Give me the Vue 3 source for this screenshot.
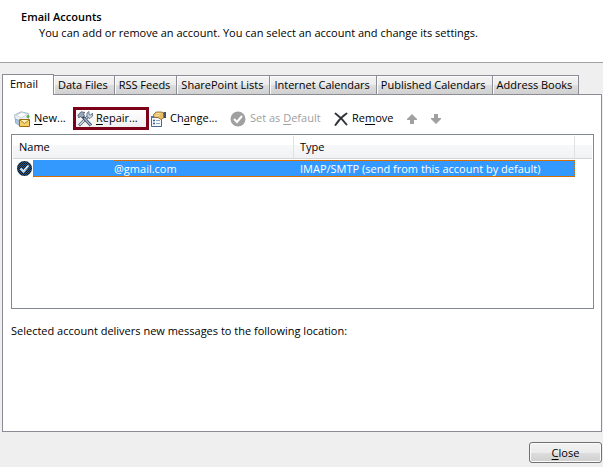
<template>
  <div class="dialog">
    <header class="dialog-header">
      <h1>Email Accounts</h1>
      <p>You can add or remove an account. You can select an account and change its settings.</p>
    </header>

    <main class="dialog-body">
      <div class="tabs" role="tablist">
        <button
          v-for="tab in tabs"
          :key="tab"
          type="button"
          role="tab"
          :aria-selected="tab === activeTab"
          :class="['tab', { active: tab === activeTab }]"
          @click="activeTab = tab"
        >{{ tab }}</button>
      </div>

      <section class="panel" role="tabpanel">
        <div class="toolbar">
          <button type="button" class="tool new">
            <svg width="16" height="16" viewBox="0 0 16 16">
              <path d="M.5 4L7 .8l7.500 1.700V8l-6 4.500-7-3z" fill="#eaf1f6" stroke="#a9bac8" />
              <path d="M2 4L8 1.500l5.500 1.500-6 4z" fill="#fff" stroke="#b4c6d6" stroke-width=".7" />
              <path d="M1.500 8l4 1.500v5L1.500 12z" fill="#a9c6de" stroke="#8aa5be" stroke-width=".8" />
              <circle cx="14" cy="5.500" r="1.500" fill="#55b73c" />
              <path d="M5.500 8.500h10v7h-10z" fill="#f7cf67" stroke="#9b6c14" />
              <path d="M6 9l4.500 3.500L15 9" fill="#fff0b8" stroke="#a8761a" stroke-width=".9" />
            </svg>
            <span><u>N</u>ew...</span>
          </button>
          <button type="button" class="tool repair">
            <svg width="16" height="16" viewBox="0 0 16 16">
              <path d="M2 14.500L11 5.500" stroke="#4a586c" stroke-width="2.600" />
              <path d="M2.500 14L11 5.500" stroke="#dbe4ee" stroke-width="1.200" />
              <path d="M10 6V2l2-1.500v3l2 .5 1.500-2v3l-2.500 2.500z" fill="#c9d6e4" stroke="#56667d" stroke-width=".8" />
              <path d="M5.500 5.500L14 14.500" stroke="#34445c" stroke-width="3" />
              <path d="M7 7L14 14.500" stroke="#9fb6d2" stroke-width="1.400" />
              <path d="M.8 4L4 .8l4 .7-1.500 1.200.8 1.800-2.300 2.300-1.800-1.300L1.800 7z" fill="#98a8ba" stroke="#4c5a6d" stroke-width=".8" />
            </svg>
            <span><u>R</u>epair...</span>
          </button>
          <button type="button" class="tool change">
            <svg width="16" height="16" viewBox="0 0 16 16">
              <path d="M1.500 5.500h10v10h-10z" fill="#f5f9fd" stroke="#49688f" />
              <path d="M1 5h11v2H1z" fill="#4d78ad" />
              <path d="M3 9.500h2M3 12.500h2" stroke="#3a5e91" stroke-width="1.500" />
              <path d="M6 9.500h4M6 12.500h4" stroke="#8ba3bf" />
              <path d="M3 4l3-3h6l2 1.500v4L11 8.500 8 6.500H4.500z" fill="#e9bd63" stroke="#93682a" stroke-width=".8" />
              <path d="M5.500 4.500h4M6.500 2.500h4" stroke="#fae3a8" />
              <path d="M13.500 1H16v6h-2.500z" fill="#42516b" />
            </svg>
            <span>Ch<u>a</u>nge...</span>
          </button>
          <button type="button" class="tool default" disabled>
            <svg width="16" height="16" viewBox="0 0 16 16">
              <circle cx="8" cy="8" r="7.500" fill="#a0a0a0" />
              <path d="M4 8l3 3 5-6" fill="none" stroke="#fff" stroke-width="2" />
            </svg>
            <span>Set as <u>D</u>efault</span>
          </button>
          <button type="button" class="tool remove">
            <svg width="14" height="14" viewBox="0 0 14 14">
              <path d="M1.500 1.500C5 4 9 8 12.500 12.500M12.500 1.500C8 4.500 4 9 1.500 13" fill="none" stroke="#30343a" stroke-width="1.900" stroke-linecap="round" />
            </svg>
            <span>Re<u>m</u>ove</span>
          </button>
          <button type="button" class="tool move" disabled aria-label="Move up">
            <svg width="10" height="10" viewBox="0 0 10 10"><path d="M5 0l5 5v1H7v4H3V6H0V5z" fill="#a0a0a0" /></svg>
          </button>
          <button type="button" class="tool move" disabled aria-label="Move down">
            <svg width="10" height="10" viewBox="0 0 10 10"><path d="M5 10l5-5V4H7V0H3v4H0v1z" fill="#a0a0a0" /></svg>
          </button>
        </div>

        <div class="account-list">
          <table>
            <colgroup>
              <col class="col-icon" />
              <col class="col-name" />
              <col />
              <col class="col-end" />
            </colgroup>
            <thead>
              <tr>
                <th colspan="2">Name</th>
                <th>Type</th>
                <th></th>
              </tr>
            </thead>
            <tbody>
              <tr v-for="account in accounts" :key="account.name">
                <td class="status">
                  <svg width="15" height="15" viewBox="0 0 15 15">
                    <defs>
                      <pattern id="dither" width="2" height="2" patternUnits="userSpaceOnUse">
                        <path d="M0 0h1v1H0zM1 1h1v1H1z" fill="#3399ff" fill-opacity=".5" />
                      </pattern>
                    </defs>
                    <circle cx="7.500" cy="7.500" r="7.500" fill="#17191d" />
                    <path d="M3.500 7.500l3 3 5-6" fill="none" stroke="#fff" stroke-width="2" />
                    <circle cx="7.500" cy="7.500" r="7.500" fill="url(#dither)" />
                  </svg>
                </td>
                <td class="selected name"><span class="mask"></span>{{ account.name }}</td>
                <td class="selected type">{{ account.type }}</td>
                <td></td>
              </tr>
            </tbody>
          </table>
        </div>

        <p class="location">Selected account delivers new messages to the following location:</p>
      </section>
    </main>

    <footer class="dialog-footer">
      <button type="button" class="close"><u>C</u>lose</button>
    </footer>
  </div>
</template>

<script setup>
import { ref } from 'vue'

const tabs = [
  'Email',
  'Data Files',
  'RSS Feeds',
  'SharePoint Lists',
  'Internet Calendars',
  'Published Calendars',
  'Address Books',
]
const activeTab = ref('Email')

const accounts = [
  { name: '@gmail.com', type: 'IMAP/SMTP (send from this account by default)' },
]
</script>

<style>
body {
  margin: 0;
  background: #efefef;
}
</style>

<style scoped>
.dialog {
  display: flex;
  flex-direction: column;
  min-height: 100vh;
  box-sizing: border-box;
  background: #efefef;
  color: #000;
  font: 11px/16px "Open Sans", "Noto Sans", sans-serif;
}

h1,
p {
  margin: 0;
  font-size: 11px;
}

h1 {
  font-weight: 600;
}

button {
  font: inherit;
  color: inherit;
}

u {
  text-underline-offset: 2px;
}

.dialog-header {
  height: 53px;
  padding: 9px 21px 0;
  background: #fff;
  border-bottom: 1px solid #a0a0a0;
}

.dialog-header p {
  padding-left: 18px;
}

.dialog-body {
  flex: 1;
  display: flex;
  flex-direction: column;
  padding: 11px 1px 0 2px;
}

.tabs {
  display: flex;
  align-items: flex-end;
}

.tab {
  height: 19px;
  margin: 0;
  padding: 0 6px 0 4px;
  border: 1px solid #8b8c96;
  border-left-width: 0;
  border-bottom: 0;
  background: linear-gradient(#f3f3f3, #ececec 50%, #dedede 50%, #d0d0d0);
  box-shadow: inset 1px 1px #fcfcfc;
  line-height: 18px;
  white-space: nowrap;
}

.tab.active {
  position: relative;
  height: 21px;
  width: 52px;
  margin-bottom: -1px;
  padding: 0 7px 2px;
  border-left-width: 1px;
  background: #fff;
  text-align: left;
}

.panel {
  flex: 1;
  padding: 12px 7px 0 8px;
  background: #fff;
  border: 1px solid #8b8c96;
}

.toolbar {
  display: flex;
  align-items: center;
  height: 23px;
  margin-bottom: 4px;
}

.tool {
  display: flex;
  align-items: center;
  gap: 4px;
  height: 23px;
  padding: 0 3px;
  border: 0;
  background: none;
  white-space: nowrap;
}

.tool span {
  padding-bottom: 2px;
}

.tool:disabled {
  color: #a0a0a0;
}

.new {
  width: 62px;
}

.repair {
  width: 76px;
  gap: 3px;
  border: 3px solid #7d0019;
  padding: 0 1px;
  background: linear-gradient(#fff, #f0f0f0);
}

.change {
  width: 78px;
  padding: 0 1px;
}

.default {
  width: 105px;
}

.remove {
  width: 68px;
  padding: 0 2px;
}

.move {
  width: 24px;
  padding: 0 7px;
}

.account-list {
  height: 175px;
  padding: 1px;
  box-sizing: border-box;
  border: 1px solid #828790;
}

table {
  width: 100%;
  table-layout: fixed;
  border-collapse: separate;
  border-spacing: 0;
}

.col-icon {
  width: 20px;
}

.col-name {
  width: 261px;
}

.col-end {
  width: 17px;
}

th {
  height: 22px;
  padding: 0 6px;
  border-right: 1px solid #e0e1e4;
  border-bottom: 1px solid #d5d5d5;
  background: linear-gradient(#fff 40%, #f7f8fa 40%, #f1f2f4);
  font-weight: normal;
  text-align: left;
}

th:last-child {
  border-right: 0;
}

tbody::before {
  content: "";
  display: block;
  height: 1px;
}

td {
  height: 17px;
  padding: 0;
  line-height: 17px;
  white-space: nowrap;
}

.status svg {
  display: block;
  margin-left: 4px;
}

/* the focus rectangle is drawn as alternating pixels round the row */
.selected {
  position: relative;
  background: #3399ff;
  color: #fff;
}

.selected::before {
  content: "";
  position: absolute;
  inset: 0;
  background:
    linear-gradient(90deg, #d06800 50%, #3399ff 50%) left top / 2px 1px repeat-x,
    linear-gradient(90deg, #d06800 50%, #3399ff 50%) left bottom / 2px 1px repeat-x;
}

/* the name column is an odd width, so count its dots from the right */
.name::before {
  background-position: right top, right bottom;
}

.name {
  padding-left: 81px;
}

.name::after,
.type::after {
  content: "";
  position: absolute;
  top: 0;
  bottom: 0;
  left: 0;
  width: 1px;
  background: linear-gradient(#d06800 50%, #3399ff 50%) left top / 1px 2px repeat-y;
}

/* covers the private part of the address */
.mask {
  position: absolute;
  top: 0;
  left: 1px;
  width: 80px;
  height: 16px;
  background: #3399ff;
}

.type {
  padding-left: 6px;
}

.type::after {
  right: 0;
  left: auto;
}

.location {
  padding-top: 14px;
}

.dialog-footer {
  display: flex;
  justify-content: flex-end;
  padding: 10px 1px 4px;
}

.close {
  width: 73px;
  height: 21px;
  padding: 0;
  border: 1px solid #707070;
  border-radius: 3px;
  background: linear-gradient(#f2f2f2, #ebebeb 50%, #dddddd 50%, #cfcfcf);
  box-shadow: inset 0 0 0 1px #fbfbfb;
}
</style>
